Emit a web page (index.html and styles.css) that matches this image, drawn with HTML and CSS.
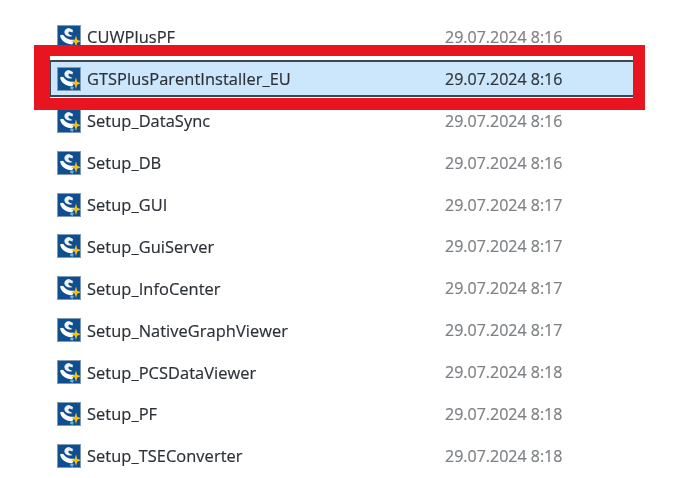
FILE: index.html
```html
<!DOCTYPE html>
<html lang="en">
<head>
<meta charset="utf-8">
<title>Installer files</title>
<link rel="stylesheet" href="styles.css">
</head>
<body>
<svg class="defs" width="0" height="0" aria-hidden="true">
  <symbol id="setup" viewBox="0 0 24 24">
    <rect x="0.5" y="0.5" width="23" height="23" fill="#0f4f8f" stroke="#7f9ab5"/>
    <path d="M3 10.5 C5.5 9 6.5 10 7.5 11.5 C9.5 14 13 15 17.5 14.8 L15.5 19 C9.5 19.5 4.5 16.5 3 10.5 Z" fill="#fff"/>
    <path d="M7.5 8 C7 5.5 9 3.2 12 3 L16 5 L15.5 7.5 L12.5 6.5 C11 7 11 8.5 12.5 9.5 L15.5 11 C12 12.5 8.2 11 7.5 8 Z" fill="#eef3f8"/>
    <path d="M19 10.5 L20.2 14.8 L24 16.2 L20.2 17.8 L19 22 L17.8 17.8 L14 16.2 L17.8 14.8 Z" fill="#f0c020"/>
    <path d="M13.5 19 L17 20 L15.5 23 L13 21.5 Z" fill="#6aaede"/>
  </symbol>
</svg>
<main class="page">
  <ul class="list">
    <li class="row"><svg class="icon"><use href="#setup"/></svg><span class="name">CUWPlusPF</span><span class="date">29.07.2024 8:16</span></li>
    <li class="row row-selected"><svg class="icon"><use href="#setup"/></svg><span class="name">GTSPlusParentInstaller_EU</span><span class="date">29.07.2024 8:16</span></li>
    <li class="row"><svg class="icon"><use href="#setup"/></svg><span class="name">Setup_DataSync</span><span class="date">29.07.2024 8:16</span></li>
    <li class="row"><svg class="icon"><use href="#setup"/></svg><span class="name">Setup_DB</span><span class="date">29.07.2024 8:16</span></li>
    <li class="row"><svg class="icon"><use href="#setup"/></svg><span class="name">Setup_GUI</span><span class="date">29.07.2024 8:17</span></li>
    <li class="row"><svg class="icon"><use href="#setup"/></svg><span class="name">Setup_GuiServer</span><span class="date">29.07.2024 8:17</span></li>
    <li class="row"><svg class="icon"><use href="#setup"/></svg><span class="name">Setup_InfoCenter</span><span class="date">29.07.2024 8:17</span></li>
    <li class="row"><svg class="icon"><use href="#setup"/></svg><span class="name">Setup_NativeGraphViewer</span><span class="date">29.07.2024 8:17</span></li>
    <li class="row"><svg class="icon"><use href="#setup"/></svg><span class="name">Setup_PCSDataViewer</span><span class="date">29.07.2024 8:18</span></li>
    <li class="row"><svg class="icon"><use href="#setup"/></svg><span class="name">Setup_PF</span><span class="date">29.07.2024 8:18</span></li>
    <li class="row"><svg class="icon"><use href="#setup"/></svg><span class="name">Setup_TSEConverter</span><span class="date">29.07.2024 8:18</span></li>
  </ul>
  <div class="callout"></div>
</main>
</body>
</html>
```
FILE: styles.css
```css
html, body {
  margin: 0;
  background: #fff;
}
.defs {
  position: absolute;
}
.page {
  position: relative;
  width: 690px;
  height: 478px;
  overflow: hidden;
  padding: 16px 57px 0 51px;
  box-sizing: border-box;
  font-family: "Open Sans", "Noto Sans", sans-serif;
  font-size: 16px;
  filter: blur(0.4px);
}
.list {
  list-style: none;
  margin: 0;
  padding: 0;
  display: flex;
  flex-direction: column;
}
.row {
  display: flex;
  align-items: center;
  height: 41.9px;
  padding-left: 6px;
  box-sizing: border-box;
  border-top: 2px solid transparent;
  border-bottom: 2px solid transparent;
}
.row-selected {
  background: #cce6fb;
  border-top-color: #3d4650;
  border-bottom-color: #3d4650;
  box-shadow: -1.5px 0 0 #3d4650;
  height: 37px;
  margin: 2.5px 0 2.4px;
}
.icon {
  width: 24px;
  height: 24px;
  flex: none;
  margin-right: 6px;
}
.name {
  width: 358px;
  flex: none;
  color: #2c3137;
  font-size: 16.4px;
  letter-spacing: 0.06px;
  -webkit-text-stroke: 0.2px #2c3137;
  white-space: nowrap;
}
.date {
  color: #7d8084;
  -webkit-text-stroke: 0.2px #7d8084;
  white-space: nowrap;
}
.row-selected .date {
  color: #30353b;
  -webkit-text-stroke-color: #30353b;
}
.callout {
  position: absolute;
  left: 34px;
  top: 45px;
  width: 611px;
  height: 65px;
  box-sizing: border-box;
  border-style: solid;
  border-color: #e8141f;
  border-width: 11px 12px 12px 16px;
}
```
